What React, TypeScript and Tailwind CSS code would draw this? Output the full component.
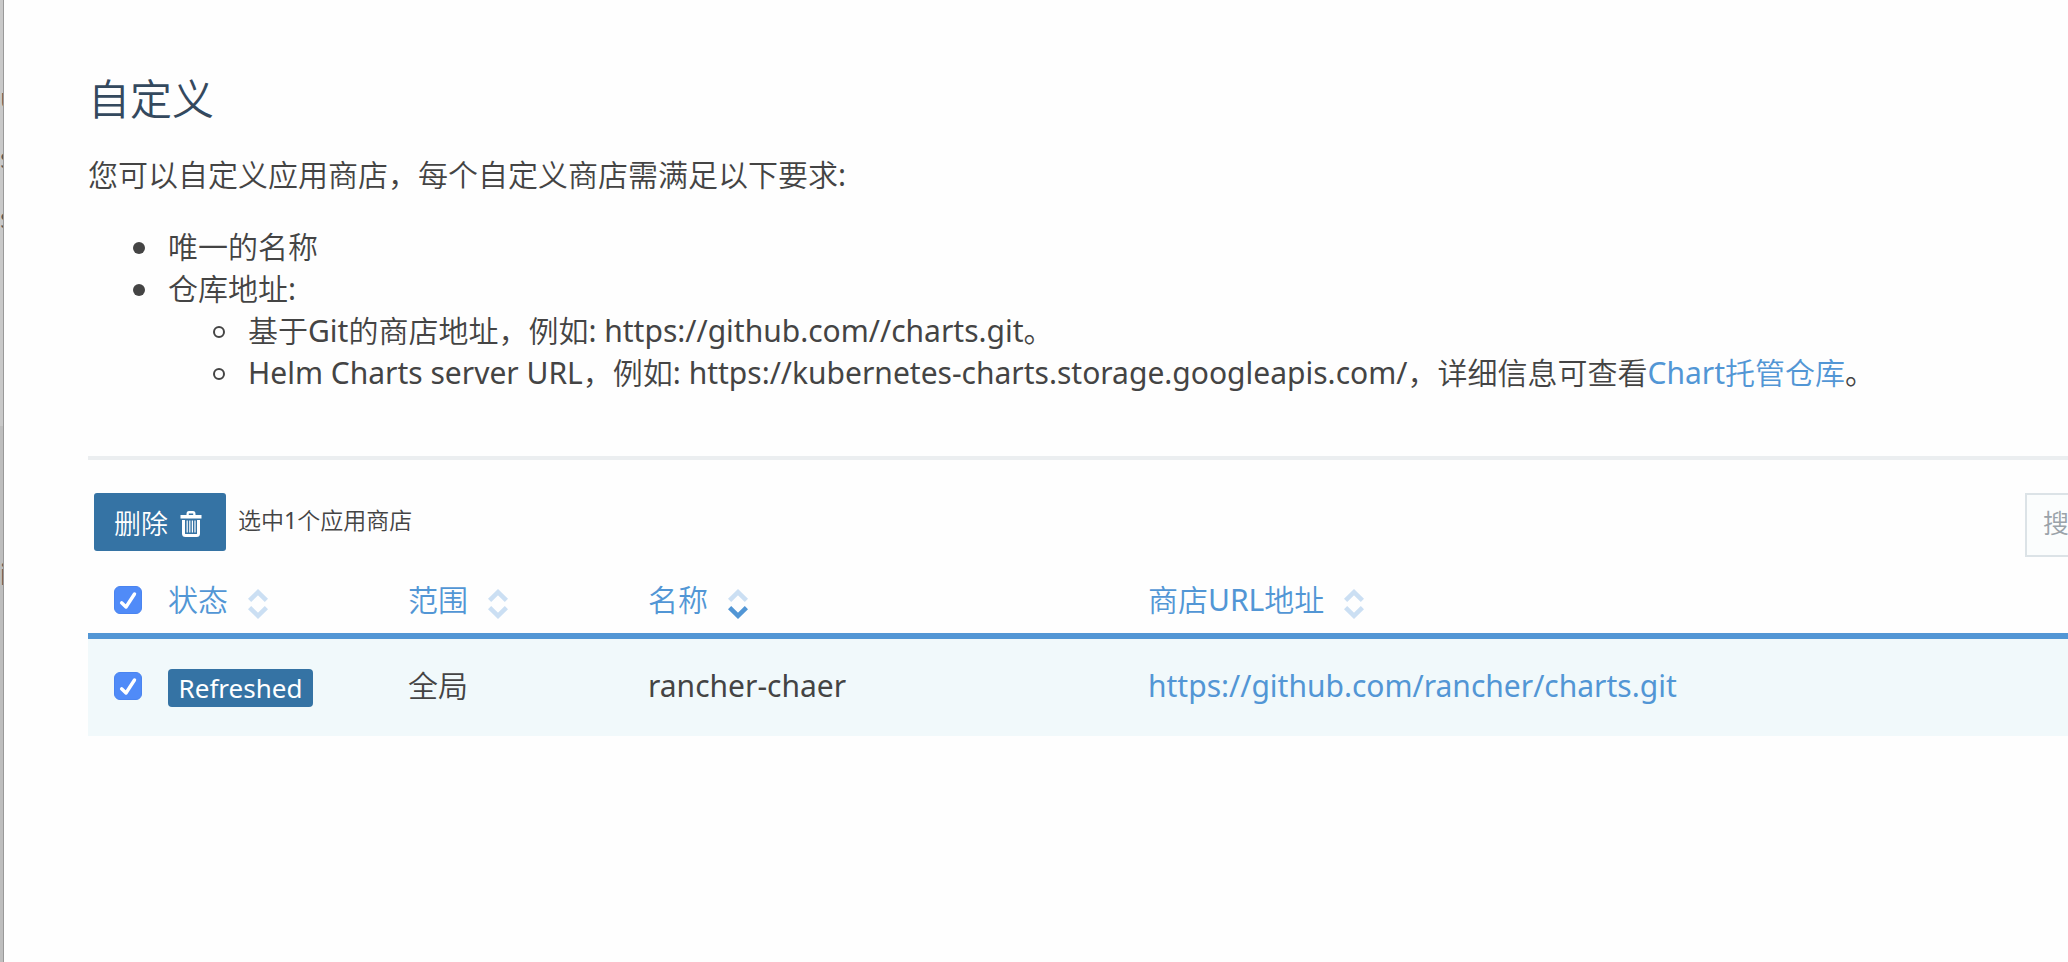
import { useState } from 'react';

type SortState = 'none' | 'desc';

function SortIcon({ state }: { state: SortState }) {
  return (
    <svg className="mb-0.5" width="20" height="30" viewBox="0 0 20 30" fill="none" strokeWidth="4.6" aria-hidden="true">
      <path d="M1.6 11.400 10 3.200l8.400 8.200" stroke="#cbdff3" />
      <path d="M1.6 18.600 10 26.800l8.400-8.200" stroke={state === 'desc' ? '#5296d5' : '#cbdff3'} />
    </svg>
  );
}

function TrashIcon() {
  return (
    <svg width="22" height="26" viewBox="0 0 22 26" aria-hidden="true">
      <path
        fill="#fff"
        fillRule="evenodd"
        d="M0.500 4H6.500V3Q6.500 0 9 0h4Q15.500 0 15.500 3V4h6v3.600h-21zM8.800 4h4.400V2.600H8.800z"
      />
      <path d="M3.500 9v13.500Q3.500 24.500 5.500 24.500h11Q18.500 24.500 18.500 22.500V9" fill="none" stroke="#fff" strokeWidth="3" />
      <path d="M7.200 9.500v12M9.800 9.500v12M12.400 9.500v12M15 9.500v12" stroke="#fff" strokeWidth="1.200" />
    </svg>
  );
}

function Check({ label, checked, onChange }: { label: string; checked: boolean; onChange: () => void }) {
  return (
    <label className="grid size-7">
      <input
        type="checkbox"
        aria-label={label}
        checked={checked}
        onChange={onChange}
        className="col-start-1 row-start-1 size-7 appearance-none rounded-md border border-[#b5b5b5] bg-white checked:border-[#4a84f0] checked:bg-[#508bf8]"
      />
      {checked && (
        <svg className="pointer-events-none col-start-1 row-start-1" viewBox="0 0 28 28" fill="none" aria-hidden="true">
          <path d="M7.600 16.800 12 21 20.500 8" stroke="#fff" strokeWidth="3.400" strokeLinecap="round" strokeLinejoin="round" />
        </svg>
      )}
    </label>
  );
}

const columns: { title: string; width: string; sort: SortState }[] = [
  { title: '状态', width: 'w-60', sort: 'none' },
  { title: '范围', width: 'w-60', sort: 'none' },
  { title: '名称', width: 'w-[500px]', sort: 'desc' },
  { title: '商店URL地址', width: '', sort: 'none' },
];

const disc =
  "before:-ml-[35px] before:mr-[23px] before:inline-block before:size-3 before:rounded-full before:bg-[#444] before:align-[4px] before:content-['']";
const circle =
  "before:-ml-[35px] before:mr-[23px] before:inline-block before:size-3 before:rounded-full before:border-2 before:border-[#444] before:align-[4px] before:content-['']";

export default function App() {
  const [checked, setChecked] = useState(true);
  const toggle = () => setChecked(!checked);

  return (
    <div className="flex min-h-screen overflow-hidden bg-[#fefefe] font-['Noto_Sans','Noto_Sans_CJK_SC_DemiLight','Noto_Sans_CJK_SC',sans-serif] text-[30px] leading-[42px] font-normal text-[#444]">
      <aside className="flex w-1 shrink-0 flex-col overflow-hidden border-r border-[#999] bg-[#c9c9c9] pt-[67px] text-[28px] leading-[60px] text-[#555]">
        <span className="h-[60px]">u</span>
        <span className="h-[60px]">s</span>
        <span className="h-[239px]">s</span>
        <span className="flex grow flex-col bg-[#bebebe] pt-[118px] font-semibold">i</span>
      </aside>

      <main className="min-w-0 grow pt-[68px] pl-[84px]">
        <h1 className="text-[42px] leading-[62px] text-[#34495e]">自定义</h1>
        <p className="mt-6">您可以自定义应用商店，每个自定义商店需满足以下要求:</p>
        <ul className="mt-[30px] pl-20">
          <li className={disc}>唯一的名称</li>
          <li className={disc}>
            仓库地址:
            <ul className="pl-20">
              <li className={circle}>基于Git的商店地址，例如: https://github.com//charts.git。</li>
              <li className={circle}>
                Helm Charts server URL，例如: https://kubernetes-charts.storage.googleapis.com/，详细信息可查看
                <a href="#hosting" className="text-[#5296d5]">Chart托管仓库</a>。
              </li>
            </ul>
          </li>
        </ul>

        <hr className="mt-[62px] border-t-4 border-[#ebeef0]" />

        <div className="mt-[33px] flex h-16 items-start justify-between">
          <div className="flex items-center gap-3 pl-[6px]">
            <button type="button" className="flex h-[58px] w-[132px] items-center justify-center gap-3 rounded-[3px] bg-[#3573a4] pt-1 pr-1 text-[27px] text-white">
              删除
              <TrashIcon />
            </button>
            <span className="pb-1 text-[23px]">选中1个应用商店</span>
          </div>
          <input
            type="search"
            aria-label="搜索"
            placeholder="搜索"
            className="-mr-[257px] h-16 w-[300px] border-2 border-[#dce3e7] bg-[#fbfdfd] px-4 pb-1 text-[26px] placeholder:text-[#9aa3a9]"
          />
        </div>

        <table className="mt-3 w-full table-fixed border-collapse text-left">
          <thead className="text-[#5296d5]">
            <tr className="h-[67px] border-b-6 border-[#5296d5]">
              <th className="w-20 pb-0.5 pl-[26px]">
                <Check label="全选" checked={checked} onChange={toggle} />
              </th>
              {columns.map((c) => (
                <th key={c.title} className={`pb-0.5 font-normal ${c.width}`}>
                  <button type="button" className="flex items-end gap-5">
                    {c.title}
                    <SortIcon state={c.sort} />
                  </button>
                </th>
              ))}
            </tr>
          </thead>
          <tbody>
            <tr className="h-[100px] bg-[#f1f9fb]">
              <td className="pb-1 pl-[26px]">
                <Check label="选择 rancher-chaer" checked={checked} onChange={toggle} />
              </td>
              <td className="p-0">
                <span className="flex h-[38px] w-[145px] items-center justify-center rounded bg-[#3573a4] text-[26px] text-white">
                  Refreshed
                </span>
              </td>
              <td className="pb-1">全局</td>
              <td className="pb-1">rancher-chaer</td>
              <td className="pb-1">
                <a href="#charts" className="text-[#5296d5]">https://github.com/rancher/charts.git</a>
              </td>
            </tr>
          </tbody>
        </table>
      </main>
    </div>
  );
}
